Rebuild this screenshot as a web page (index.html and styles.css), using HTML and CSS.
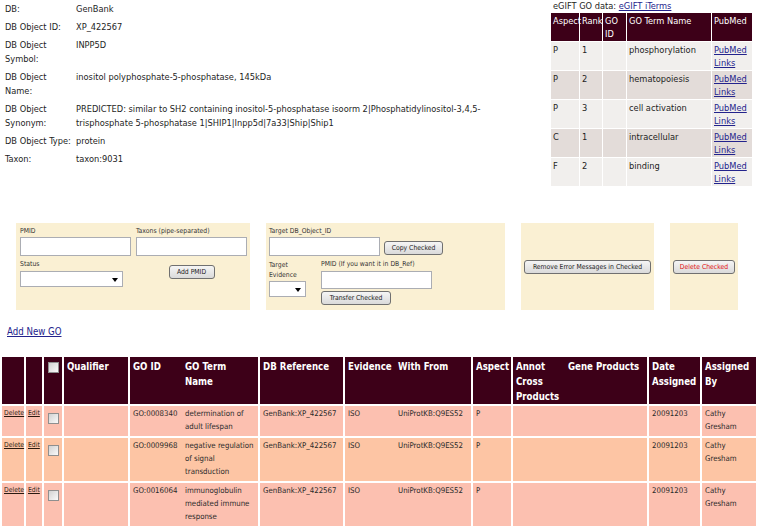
FILE: index.html
```html
<!DOCTYPE html>
<html>
<head>
	<title>GO annotation</title>
	<link rel="stylesheet" href="styles.css">
</head>
<body>
	<div class="top">
		<table class="info">
			<tr><td class="lbl">DB:</td><td class="val">GenBank</td></tr>
			<tr><td class="lbl">DB Object ID:</td><td class="val">XP_422567</td></tr>
			<tr><td class="lbl">DB Object Symbol:</td><td class="val">INPP5D</td></tr>
			<tr><td class="lbl">DB Object Name:</td><td class="val">inositol polyphosphate-5-phosphatase, 145kDa</td></tr>
			<tr><td class="lbl">DB Object Synonym:</td><td class="val">PREDICTED: similar to SH2 containing inositol-5-phosphatase isoorm 2|Phosphatidylinositol-3,4,5-trisphosphate 5-phosphatase 1|SHIP1|Inpp5d|7a33|Ship|Ship1</td></tr>
			<tr><td class="lbl">DB Object Type:</td><td class="val">protein</td></tr>
			<tr><td class="lbl">Taxon:</td><td class="val">taxon:9031</td></tr>
		</table>
		<div class="egift">
			<div class="cap">eGIFT GO data: <a href="#">eGIFT iTerms</a></div>
			<table class="gotbl">
				<colgroup>
					<col class="k1"><col class="k2"><col class="k3"><col class="k4"><col class="k5">
				</colgroup>
				<tr><th>Aspect</th><th>Rank</th><th>GO ID</th><th>GO Term Name</th><th>PubMed</th></tr>
				<tr class="lt"><td>P</td><td>1</td><td></td><td>phosphorylation</td><td><a href="#">PubMed Links</a></td></tr>
				<tr class="dk"><td>P</td><td>2</td><td></td><td>hematopoiesis</td><td><a href="#">PubMed Links</a></td></tr>
				<tr class="lt"><td>P</td><td>3</td><td></td><td>cell activation</td><td><a href="#">PubMed Links</a></td></tr>
				<tr class="dk"><td>C</td><td>1</td><td></td><td>intracellular</td><td><a href="#">PubMed Links</a></td></tr>
				<tr class="lt"><td>F</td><td>2</td><td></td><td>binding</td><td><a href="#">PubMed Links</a></td></tr>
			</table>
		</div>
	</div>

	<div class="boxes">
		<div class="box b1">
			<div class="g1">
				<div>PMID</div>
				<div>Taxons (pipe-separated)</div>
				<input type="text" class="txt">
				<input type="text" class="txt">
				<div class="lab2">Status</div>
				<div class="sel s1"><span class="arr"></span></div>
				<button class="btn addp">Add PMID</button>
			</div>
		</div>
		<div class="box b2">
			<div class="row1">
				<div class="col">
					<div>Target DB_Object_ID</div>
					<input type="text" class="txt">
				</div>
				<button class="btn copy">Copy Checked</button>
			</div>
			<div class="row2">
				<div class="ev">
					<div class="evl">Target Evidence</div>
					<div class="sel s2"><span class="arr"></span></div>
				</div>
				<div class="col">
					<div class="nw">PMID (If you want it in DB_Ref)</div>
					<input type="text" class="txt t2">
					<button class="btn trans">Transfer Checked</button>
				</div>
			</div>
		</div>
		<div class="box b3">
			<button class="btn rem">Remove Error Messages in Checked</button>
		</div>
		<div class="box b4">
			<button class="btn del">Delete Checked</button>
		</div>
	</div>

	<a class="addgo" href="#">Add New GO</a>

	<table class="annot">
		<colgroup>
			<col class="w-del"><col class="w-edit"><col class="w-chk"><col class="w-qual"><col class="w-goid"><col class="w-term">
			<col class="w-ref"><col class="w-evi"><col class="w-with"><col class="w-asp"><col class="w-cross"><col class="w-gene">
			<col class="w-date"><col class="w-by">
		</colgroup>
		<tr>
			<th></th><th></th><th class="cb"><input type="checkbox" class="chk"></th>
			<th>Qualifier</th><th class="nb">GO ID</th><th>GO Term Name</th><th>DB Reference</th>
			<th class="nb">Evidence</th><th>With From</th><th>Aspect</th><th class="nb">Annot Cross Products</th>
			<th>Gene Products</th><th>Date Assigned</th><th>Assigned By</th>
		</tr>
		<tr class="r1">
			<td class="lk"><a href="#">Delete</a></td><td class="lk"><a href="#">Edit</a></td><td class="cb"><input type="checkbox" class="chk"></td>
			<td></td><td class="nb">GO:0008340</td><td>determination of adult lifespan</td><td>GenBank:XP_422567</td>
			<td class="nb">ISO</td><td>UniProtKB:Q9ES52</td><td>P</td><td class="nb"></td><td></td><td>20091203</td><td>Cathy Gresham</td>
		</tr>
		<tr class="r2">
			<td class="lk"><a href="#">Delete</a></td><td class="lk"><a href="#">Edit</a></td><td class="cb"><input type="checkbox" class="chk"></td>
			<td></td><td class="nb">GO:0009968</td><td>negative regulation of signal transduction</td><td>GenBank:XP_422567</td>
			<td class="nb">ISO</td><td>UniProtKB:Q9ES52</td><td>P</td><td class="nb"></td><td></td><td>20091203</td><td>Cathy Gresham</td>
		</tr>
		<tr class="r1">
			<td class="lk"><a href="#">Delete</a></td><td class="lk"><a href="#">Edit</a></td><td class="cb"><input type="checkbox" class="chk"></td>
			<td></td><td class="nb">GO:0016064</td><td>immunoglobulin mediated immune response</td><td>GenBank:XP_422567</td>
			<td class="nb">ISO</td><td>UniProtKB:Q9ES52</td><td>P</td><td class="nb"></td><td></td><td>20091203</td><td>Cathy Gresham</td>
		</tr>
	</table>
</body>
</html>
```

FILE: styles.css
```css
body{
	margin:0;
	font-family:"DejaVu Sans Condensed","DejaVu Sans","Liberation Sans",sans-serif;
	font-stretch:condensed;
	color:#1e1e1e;
	background:#fff;
}
a{
	color:#23238c;
}
.top{
	display:flex;
	align-items:flex-start;
}
.info{
	border-collapse:collapse;
	margin-left:3px;
	font-size:9.2px;
	line-height:14px;
}
.info td{
	padding:2px;
	vertical-align:top;
}
.info .lbl{
	width:67px;
}
.info .val{
	width:420px;
}
.egift{
	margin-left:auto;
	margin-right:7px;
	width:202px;
	font-size:9.2px;
}
.cap{
	height:13px;
	line-height:12px;
	padding-left:2px;
}
.gotbl{
	border-collapse:separate;
	border-spacing:0;
	table-layout:fixed;
	width:202px;
	line-height:13px;
}
.k1{width:29px;}
.k2{width:23px;}
.k3{width:24px;}
.k4{width:85px;}
.k5{width:41px;}
.gotbl th,.gotbl td{
	padding:1px 2px;
	border-right:1px solid #fff;
	border-bottom:1px solid #fff;
	text-align:left;
	vertical-align:top;
	font-weight:normal;
}
.gotbl th{
	background:#3d0018;
	color:#fff;
}
.gotbl .lt td{
	background:#f1efed;
}
.gotbl .dk td{
	background:#e3dcd9;
}

.boxes{
	display:flex;
	gap:16px;
	margin:36px 0 0 16px;
}
.box{
	box-sizing:border-box;
	height:87px;
	background:#faf0d3;
	padding:4px 3px;
	font-size:6.8px;
	line-height:9px;
	color:#333;
}
.b1{
	width:234px;
	padding-left:4px;
}
.b2{
	width:239px;
}
.b3,.b4{
	display:flex;
	align-items:center;
	justify-content:center;
}
.b3{
	width:133px;
}
.b4{
	width:68px;
}
.g1{
	display:grid;
	grid-template-columns:111px 111px;
	column-gap:5px;
}
.txt{
	display:block;
	box-sizing:border-box;
	width:111px;
	height:19px;
	margin:1px 0 0;
	padding:0;
	border:1px solid #abadb3;
	background:#fff;
}
.lab2{
	margin-top:4px;
}
.sel{
	display:flex;
	justify-content:flex-end;
	align-items:center;
	box-sizing:border-box;
	height:16px;
	border:1px solid #abadb3;
	background:#fff;
	padding:1px 4px 0 0;
}
.s1{
	width:103px;
	margin-top:2px;
}
.s2{
	width:37px;
	margin-top:1px;
}
.arr{
	width:0;
	height:0;
	border-left:3.5px solid transparent;
	border-right:3.5px solid transparent;
	border-top:4px solid #000;
}
.btn{
	box-sizing:border-box;
	height:14px;
	padding:0;
	font-family:inherit;
	font-size:6.8px;
	color:#222;
	border:1px solid #707070;
	border-radius:3px;
	background:linear-gradient(#f5f5f5,#dadada);
}
.addp{
	grid-column:2;
	grid-row:3 / span 2;
	justify-self:center;
	align-self:center;
	width:46px;
}
.row1{
	display:flex;
	align-items:flex-end;
}
.row1 .col{
	width:111px;
}
.copy{
	width:59px;
	margin:0 0 1px 4px;
}
.row2{
	display:flex;
	gap:4px;
	margin-top:4px;
}
.ev{
	width:48px;
}
.evl{
	line-height:10px;
}
.nw{
	white-space:nowrap;
}
.t2{
	height:18px;
	margin-top:2px;
}
.trans{
	display:block;
	width:70px;
	margin-top:2px;
}
.rem{
	width:130px;
}
.del{
	width:65px;
	color:#e31212;
}
.addgo{
	display:block;
	width:max-content;
	margin:16px 0 0 7px;
	font-size:9.6px;
	line-height:12px;
}

.annot{
	border-collapse:separate;
	border-spacing:0;
	table-layout:fixed;
	width:756px;
	margin:19px 0 0 2px;
	font-size:7.8px;
	line-height:13px;
}
.w-del{width:24px;}
.w-edit{width:18px;}
.w-chk{width:20px;}
.w-qual{width:66px;}
.w-goid{width:52px;}
.w-term{width:78px;}
.w-ref{width:85px;}
.w-evi{width:50px;}
.w-with{width:78px;}
.w-asp{width:40px;}
.w-cross{width:52px;}
.w-gene{width:84px;}
.w-date{width:53px;}
.w-by{width:56px;}
.annot th{
	background:#3d0018;
	color:#fff;
	font-size:9.6px;
	line-height:15px;
	text-align:left;
	vertical-align:top;
	padding:2px 3px 0;
	border-right:2px solid #fff;
	border-bottom:2px solid #fff;
}
.annot td{
	padding:1px 2px 3px 3px;
	vertical-align:top;
	border-right:2px solid #fff;
	border-bottom:2px solid #fff;
	color:#2a2a2a;
}
.annot .nb{
	border-right:0;
}
.annot .r1 td{
	background:#fcc0b0;
}
.annot .r2 td{
	background:#fdc5a4;
}
.annot .lk{
	padding:1px 1px 3px 2px;
	font-size:6.8px;
}
.annot .lk a{
	color:#2a1a10;
}
.annot .cb{
	padding:0 0 0 4px;
}
.chk{
	appearance:none;
	display:block;
	box-sizing:border-box;
	width:11px;
	height:11px;
	margin:5px 0 0;
	border:1px solid #8f8f8f;
	background:linear-gradient(135deg,#d2d2d2,#fafafa);
}
.annot td.cb .chk{
	margin-top:7px;
}
```
